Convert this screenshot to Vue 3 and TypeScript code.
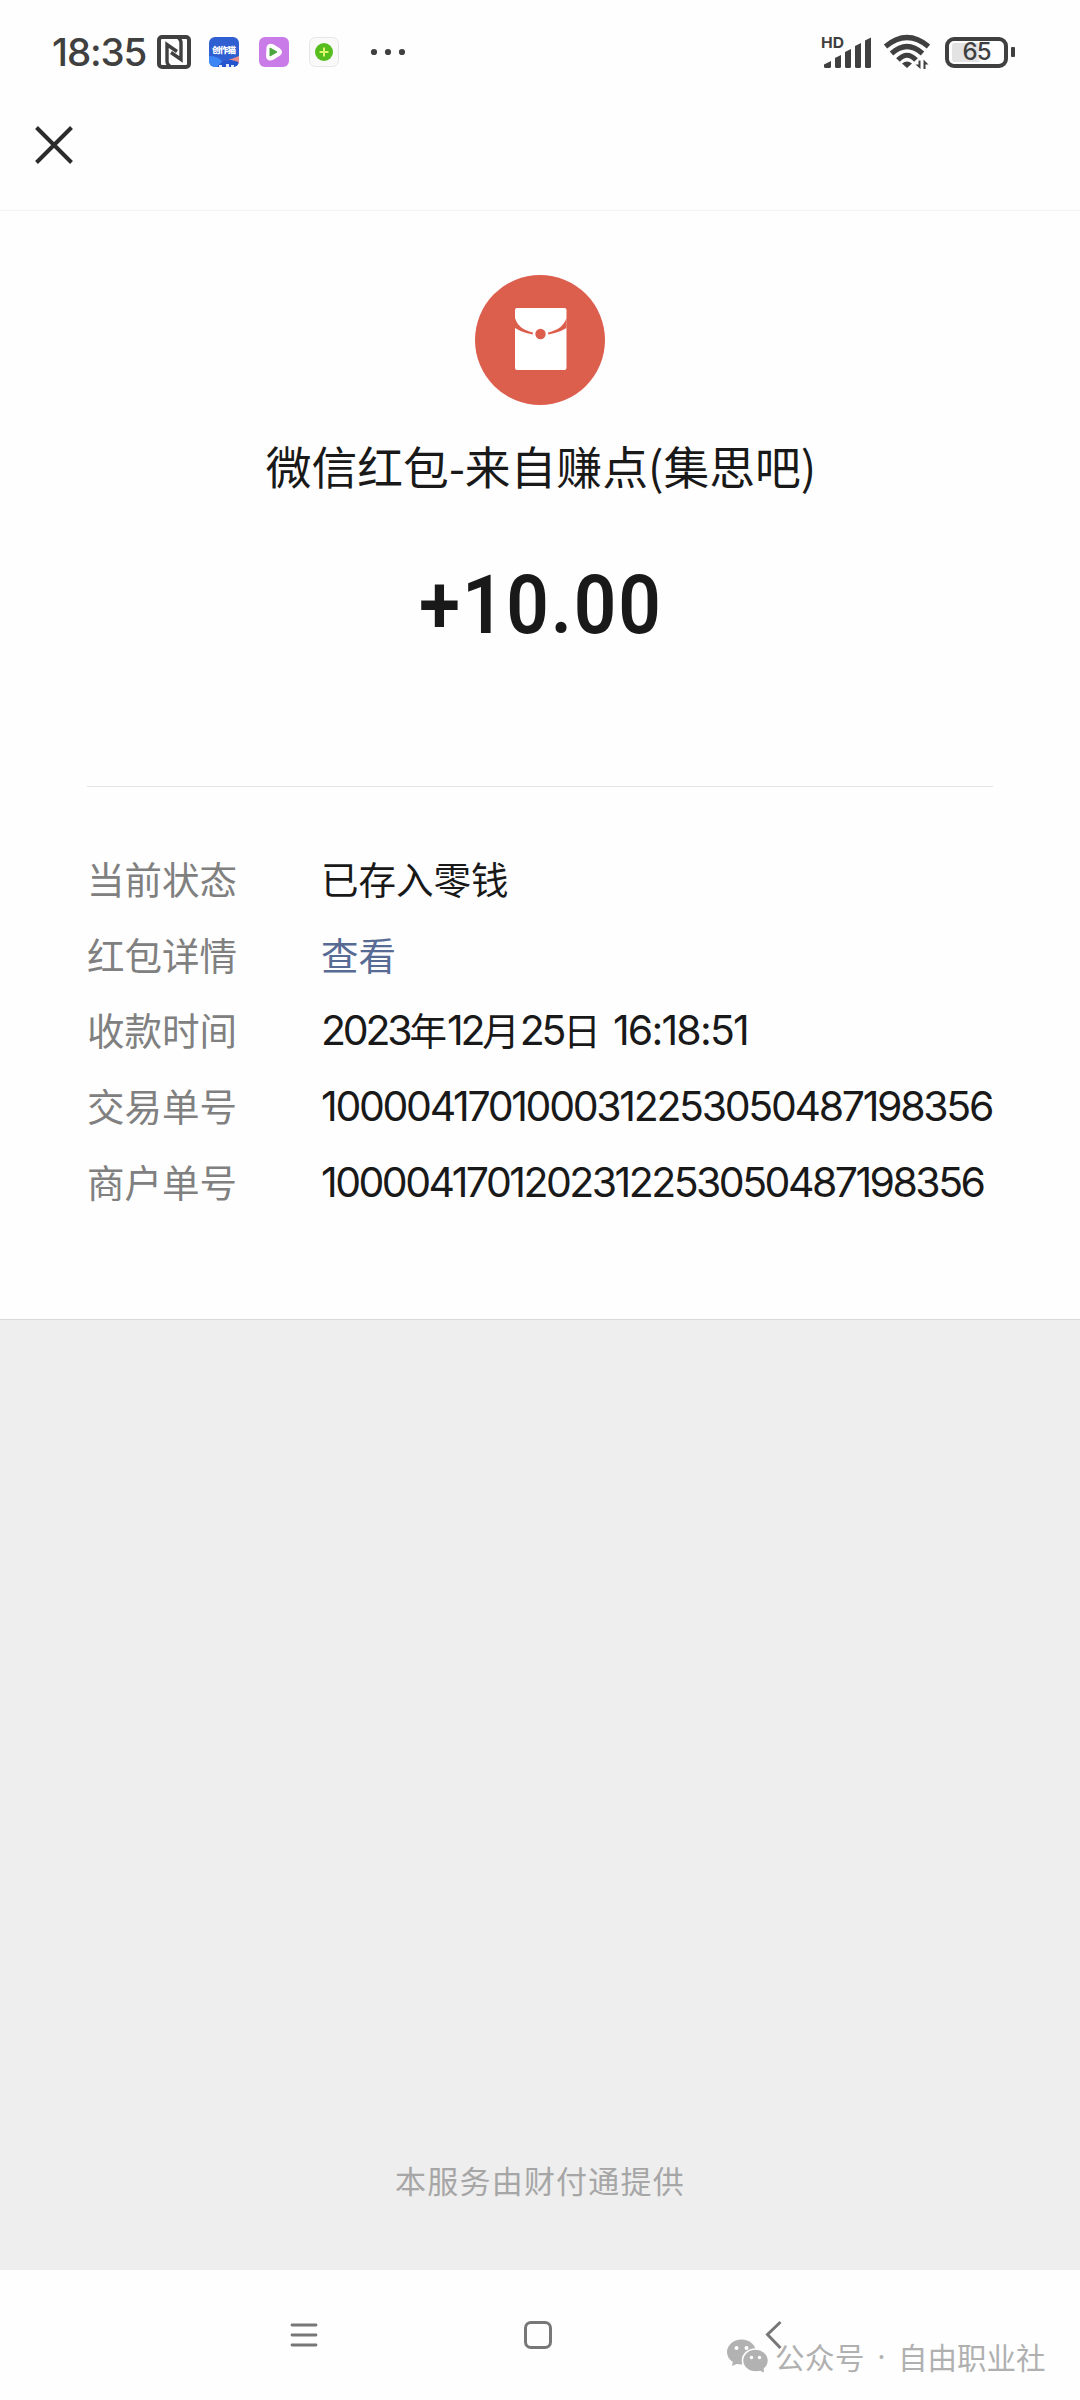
<script setup lang="ts">
interface DetailRow {
  label: string
  value: string
  link?: boolean
  tone?: string
}

const rows: DetailRow[] = [
  { label: '当前状态', value: '已存入零钱' },
  { label: '红包详情', value: '查看', link: true },
  { label: '收款时间', value: '2023年12月25日 16:18:51', tone: 'date' },
  { label: '交易单号', value: '1000041701000312253050487198356' },
  { label: '商户单号', value: '1000041701202312253050487198356', tone: 'tight' },
]

interface Run {
  text: string
  latin: boolean
  time: boolean
}

// Digits are set slightly larger than the Han characters around them.
function runs(value: string): Run[] {
  const parts = value.match(/[\x20-\x7e]+|[^\x20-\x7e]+/g) ?? []
  return parts.map((text) => ({
    text,
    latin: /^[\x20-\x7e]/.test(text),
    time: text.includes(':'),
  }))
}
</script>

<template>
  <div class="screen">
    <header class="status">
      <span class="clock">18:35</span>
      <svg class="nfc" width="34" height="34" viewBox="0 0 34 34" fill="none" stroke="#404040">
        <rect x="2" y="2" width="30" height="30" rx="3" stroke-width="4" />
        <path d="M14 32Q10 30 10 26V9.500L20 16.500" stroke-width="3.400" />
        <path d="M20 2Q24 4 24 8V24.500L14 17.500" stroke-width="3.400" />
      </svg>
      <svg class="app" width="30" height="30" viewBox="0 0 30 30">
        <defs>
          <clipPath id="appClip"><rect width="30" height="30" rx="6" /></clipPath>
        </defs>
        <g clip-path="url(#appClip)">
          <rect width="30" height="30" fill="#2f5fd0" />
          <path d="M0 19Q9 19 13 24L10 30H0Z" fill="#3d86f5" />
          <path d="M17 24L30 19V26Z" fill="#e58b8b" />
          <path d="M8 30Q14 22 22 23T30 27V30Z" fill="#2455cf" />
          <path d="M10 28h3v2h-3zM17 27h3v3h-3zM22 28h3v2h-3z" fill="#dfeaff" />
          <text x="15" y="16" text-anchor="middle" textLength="24" class="app-name">创作猫</text>
        </g>
      </svg>
      <svg class="app" width="30" height="30" viewBox="0 0 30 30">
        <rect width="30" height="30" rx="6" fill="#c97be8" />
        <path d="M10 10.500Q10.500 8.500 13 9.500L19.500 13.500Q21.500 15 19.500 16.500L13 20.500Q10 22 9.500 19.500Z" fill="#fff" stroke="#fff" stroke-width="5" stroke-linejoin="round" />
        <path d="M11 11V19L18 15Z" fill="#4ba63f" stroke="#4ba63f" stroke-linejoin="round" />
      </svg>
      <svg class="app" width="30" height="30" viewBox="0 0 30 30">
        <rect x=".5" y=".5" width="29" height="29" rx="6" fill="#f9f9f9" stroke="#e6e6e6" />
        <circle cx="15" cy="15" r="9" fill="#55bd1d" />
        <path d="M15 10.500V19.500M10.500 15H19.500" stroke="#dcf56a" stroke-width="2" />
      </svg>
      <svg class="more" width="36" height="8" viewBox="0 0 36 8" fill="#404040">
        <circle cx="4" cy="4" r="3.1" /><circle cx="18" cy="4" r="3.1" /><circle cx="32" cy="4" r="3.1" />
      </svg>
      <div class="grow"></div>
      <svg class="signal" width="52" height="34" viewBox="0 0 52 34" fill="#404040">
        <text x="1" y="12.500" class="hd" textLength="23" lengthAdjust="spacingAndGlyphs">HD</text>
        <path d="M4 29.500L11 26V31.500Q11 33 9.500 33H5.500Q4 33 4 31.500Z" />
        <path d="M15 23L21 20V31.500Q21 33 19.500 33H16.500Q15 33 15 31.500Z" />
        <path d="M25 17L31 14V31.500Q31 33 29.500 33H26.500Q25 33 25 31.500Z" />
        <path d="M35 11L41 8V31.500Q41 33 39.500 33H36.500Q35 33 35 31.500Z" />
        <path d="M45 5.500L51 2.500V31.500Q51 33 49.500 33H46.500Q45 33 45 31.500Z" />
      </svg>
      <svg class="wifi" width="46" height="34" viewBox="0 0 46 34" fill="none" stroke="#404040" stroke-width="5.200">
        <path d="M1.500 11.500Q23 -6.500 44.500 11.500" />
        <path d="M7.500 18.500Q23 4.500 38.500 18.500" />
        <path d="M14 25Q23 15.500 32 25" />
        <path d="M18 28.500Q23 24.500 28 28.500L23 33Z" fill="#404040" stroke="none" />
        <path d="M36.500 25.500V34L31.500 29.500H34.500V25.500ZM39.500 34V24.500L44.500 29.500H41.500V34Z" fill="#404040" stroke="none" />
      </svg>
      <div class="battery"><span>65</span></div>
      <div class="nub"></div>
    </header>

    <nav class="topbar">
      <svg width="38" height="38" viewBox="0 0 38 38" stroke="#2b2b2b" stroke-width="4">
        <path d="M1.500 1.500L36.500 36.500M36.500 1.500L1.500 36.500" />
      </svg>
    </nav>

    <main class="card">
      <svg class="badge" width="130" height="130" viewBox="0 0 130 130">
        <circle cx="65" cy="65" r="65" fill="#dc5f4e" />
        <rect x="40" y="33" width="51.500" height="62" rx="2" fill="#fff" />
        <path d="M40 43Q44 57 65.500 58.500Q87 57 91.500 43V53Q82 59 65.500 60.500Q49 59 40 53Z" fill="#dc5f4e" />
        <circle cx="65.500" cy="59" r="7.800" fill="#fff" />
        <circle cx="65.500" cy="59" r="5.200" fill="#dc5f4e" />
      </svg>
      <h1 class="title">微信红包-来自赚点(集思吧)</h1>
      <div class="amount"><span>+10.00</span></div>

      <dl class="details">
        <div v-for="row in rows" :key="row.label" class="row">
          <dt>{{ row.label }}</dt>
          <dd :class="[row.tone, { link: row.link }]"><span v-for="(run, i) in runs(row.value)" :key="i" :class="{ latin: run.latin, time: run.time }">{{ run.text }}</span></dd>
        </div>
      </dl>
    </main>

    <section class="provider">本服务由财付通提供</section>

    <footer class="navbar">
      <svg class="menu" width="28" height="26" viewBox="0 0 28 26" stroke="#777" stroke-width="2.800" stroke-linecap="round">
        <path d="M2 3H26M2 13H26M2 23H26" />
      </svg>
      <svg class="home" width="28" height="28" viewBox="0 0 28 28" fill="none" stroke="#777" stroke-width="3">
        <rect x="1.500" y="1.500" width="25" height="25" rx="5.500" />
      </svg>
      <svg class="back" width="18" height="30" viewBox="0 0 18 30" fill="none" stroke="#777" stroke-width="3">
        <path d="M15.500 2L2.500 14.500L15.500 28" />
      </svg>
    </footer>

    <div class="watermark">
      <svg width="42" height="34" viewBox="0 0 42 34">
        <ellipse cx="14.500" cy="13" rx="14.500" ry="12.500" fill="#b2b2b2" />
        <path d="M6 22L5 27L12 24Z" fill="#b2b2b2" />
        <ellipse cx="28.500" cy="21.500" rx="13" ry="11.500" fill="#b2b2b2" stroke="#fff" stroke-width="1.600" />
        <path d="M31 31L37 33.500L36.500 28Z" fill="#b2b2b2" />
        <g fill="#fff">
          <circle cx="9.500" cy="9" r="2" /><circle cx="19.500" cy="9" r="2" />
          <circle cx="24.500" cy="18.500" r="1.700" /><circle cx="32.500" cy="18.500" r="1.700" />
        </g>
      </svg>
      <span class="kind">公众号</span><span class="dot">·</span><span class="name">自由职业社</span>
    </div>
  </div>
</template>

<style>
html,
body {
  margin: 0;
  background: #fefefe;
}
</style>

<style scoped>
.screen {
  position: relative;
  display: flex;
  flex-direction: column;
  width: 1080px;
  height: 2400px;
  overflow: hidden;
  background: #fefefe;
  color: #191919;
  font-family: 'Inter', 'Noto Sans CJK SC', sans-serif;
}
svg {
  display: block;
  flex: none;
  overflow: visible;
}
.status {
  display: flex;
  align-items: center;
  box-sizing: border-box;
  height: 104px;
  padding: 0 65px 0 52px;
  color: #404040;
}
.clock {
  width: 105px;
  font-size: 38.5px;
  font-weight: 500;
  line-height: 52px;
  letter-spacing: -1.1px;
  white-space: nowrap;
}
.nfc {
  margin-right: -1px;
}
.app {
  margin-left: 20px;
}
.nfc + .app {
  margin-left: 19px;
}
.more {
  margin-left: 31px;
}
.app-name {
  font-family: 'Noto Sans CJK SC', sans-serif;
  font-size: 8.5px;
  font-weight: 900;
  fill: #fff;
}
.hd {
  font-size: 15px;
  font-weight: 700;
}
.grow {
  flex: 1;
}
.wifi {
  margin-left: 12px;
}
.battery {
  box-sizing: border-box;
  width: 63px;
  height: 31px;
  margin-left: 15px;
  border: 4px solid #404040;
  border-radius: 9px;
  background: linear-gradient(90deg, #e3e3e3 52%, #fefefe 60%) content-box;
  padding: 2px 3px;
  display: flex;
  align-items: center;
  justify-content: center;
  font-size: 24px;
  font-weight: 500;
  line-height: 20px;
  letter-spacing: -1px;
}
.nub {
  width: 4px;
  height: 10px;
  margin-left: 3px;
  border-radius: 1px;
  background: #404040;
}
.topbar {
  display: flex;
  align-items: center;
  box-sizing: border-box;
  height: 107px;
  padding: 0 35px 24px;
  border-bottom: 1px solid #f3f3f3;
}
.card {
  display: flex;
  flex-direction: column;
  align-items: center;
  box-sizing: border-box;
  height: 1108px;
  padding-top: 64px;
}
.title {
  margin: 26px 0 0;
  padding-left: 2px;
  font-family: 'Noto Sans CJK SC', sans-serif;
  font-size: 45.8px;
  font-weight: 400;
  line-height: 68px;
  white-space: nowrap;
}
.amount {
  margin-top: 66px;
  height: 80px;
  line-height: 80px;
  font-family: 'Roboto', sans-serif;
  font-size: 82px;
  font-weight: 600;
  letter-spacing: 2px;
}
.amount span {
  display: block;
  margin-right: -2px;
  transform: scaleX(0.91);
}
.details {
  box-sizing: border-box;
  width: 906px;
  margin: 141px 0 0;
  padding-top: 53px;
  border-top: 1px solid #e4e4e4;
}
.row {
  display: flex;
  align-items: center;
  height: 75.8px;
  font-family: 'Noto Sans CJK SC', sans-serif;
  font-size: 37.5px;
  line-height: 60px;
  white-space: nowrap;
}
dt {
  flex: none;
  width: 234px;
  color: #808080;
}
dd {
  margin: 0;
}
.latin {
  font-family: 'Inter', sans-serif;
  font-size: 41px;
  letter-spacing: -2.3px;
  white-space: pre;
}
.date .latin {
  letter-spacing: -3.2px;
}
.date .time {
  letter-spacing: -1.8px;
  word-spacing: 2.5px;
}
.tight .latin {
  letter-spacing: -2.52px;
}
.link {
  color: #576b95;
}
.provider {
  display: flex;
  align-items: flex-end;
  justify-content: center;
  box-sizing: border-box;
  height: 951px;
  padding-bottom: 67px;
  border-top: 1px solid #d9d9d9;
  background: #eee;
  color: #a6a6a6;
  font-family: 'Noto Sans CJK SC', sans-serif;
  font-size: 31px;
  line-height: 46px;
  letter-spacing: 1.2px;
}
.navbar {
  display: flex;
  align-items: center;
  height: 130px;
}
.menu {
  margin-left: 290px;
}
.home {
  margin-left: 206px;
}
.back {
  margin-left: 213px;
}
.watermark {
  position: absolute;
  left: 727px;
  top: 2333px;
  display: flex;
  align-items: center;
  height: 46px;
  color: #b0b0b0;
  font-size: 29.5px;
  line-height: 46px;
  white-space: nowrap;
}
.kind,
.name {
  font-family: 'Noto Sans CJK SC', sans-serif;
}
.kind {
  margin-left: 6px;
  letter-spacing: 0.5px;
}
.dot {
  width: 33px;
  font-family: 'Noto Sans', sans-serif;
  text-align: center;
}
</style>
